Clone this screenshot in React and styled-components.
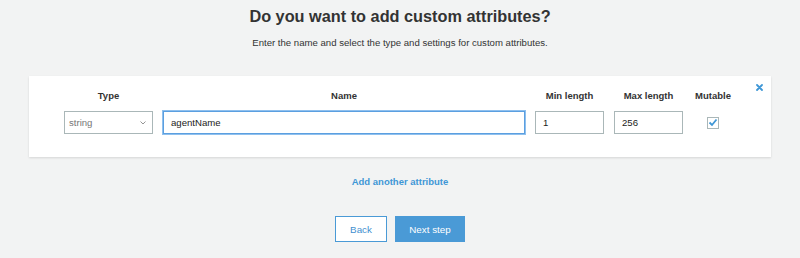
import React from "react";
import styled, { createGlobalStyle } from "styled-components";

const Global = createGlobalStyle`
  html, body { margin: 0; padding: 0; background: #f2f3f3; }
  body { font-family: "Liberation Sans", Arial, sans-serif; color: #333; }
  * { box-sizing: border-box; }
`;

const Page = styled.div`
  width: 800px;
  height: 258px;
  display: flex;
  flex-direction: column;
  align-items: center;
  padding-top: 6px;
`;

const Title = styled.h1`
  margin: 0;
  font-size: 16.3px;
  line-height: 20px;
  font-weight: 700;
  color: #333;
`;

const Subtitle = styled.p`
  margin: 10px 0 0;
  font-size: 9.6px;
  line-height: 14px;
  color: #333;
`;

const Card = styled.div`
  position: relative;
  margin-top: 26px;
  width: 742px;
  background: #fff;
  box-shadow: 0 1px 2px rgba(0, 0, 0, 0.12);
  padding: 13px 0 23px 35px;
`;

const Grid = styled.div`
  display: grid;
  grid-template-columns: 89px 362px 69px 69px 40px;
  column-gap: 10px;
  row-gap: 9px;
  align-items: center;
`;

const Label = styled.div`
  font-size: 9.5px;
  font-weight: 700;
  line-height: 13px;
  text-align: center;
  color: #333;
  white-space: nowrap;
`;

const Field = styled.div`
  height: 23px;
  border: 1px solid ${(p) => (p.$focus ? "#5b9fe0" : "#aab7b8")};
  box-shadow: ${(p) => (p.$focus ? "0 0 0 1px #8fc0ee" : "none")};
  background: #fff;
  display: flex;
  align-items: center;
  justify-content: space-between;
  padding: 0 6px 0 ${(p) => (p.$select ? "4px" : "7px")};
  font-size: 9.6px;
  color: ${(p) => (p.$select ? "#777" : "#222")};
`;

const CheckCell = styled.div`
  display: flex;
  justify-content: center;
`;

const Check = styled.div`
  width: 12px;
  height: 12px;
  border: 1px solid #aab7b8;
  background: #fff;
  display: flex;
  align-items: center;
  justify-content: center;
`;

const Close = styled.div`
  position: absolute;
  top: 8px;
  right: 8px;
  width: 7px;
  height: 7px;
  display: flex;
`;

const AddLink = styled.a`
  margin-top: 18px;
  font-size: 9.5px;
  font-weight: 700;
  color: #3f97d6;
  line-height: 14px;
`;

const Buttons = styled.div`
  display: flex;
  gap: 8px;
  margin-top: 27px;
`;

const Button = styled.button`
  height: 26px;
  padding: 0;
  width: ${(p) => (p.$primary ? "70px" : "52px")};
  border: 1px solid #4a9ad6;
  background: ${(p) => (p.$primary ? "#4a9ad6" : "#fff")};
  color: ${(p) => (p.$primary ? "#fff" : "#3f8fcf")};
  font-family: "Liberation Sans", Arial, sans-serif;
  font-size: 9.8px;
`;

const Chevron = () => (
  <svg width="6" height="4" viewBox="0 0 6 4">
    <path d="M0.5 0.5l2.5 2.5 2.5-2.5" fill="none" stroke="#888" strokeWidth="0.9" />
  </svg>
);

const Tick = () => (
  <svg width="10" height="9" viewBox="0 0 10 9">
    <path d="M1.5 4.5l2.5 2.5 4.5-5.5" fill="none" stroke="#3f97d6" strokeWidth="1.8" />
  </svg>
);

const XIcon = () => (
  <svg width="7" height="7" viewBox="0 0 7 7">
    <path d="M1 1l5 5M6 1l-5 5" stroke="#3f97d6" strokeWidth="1.8" strokeLinecap="round" />
  </svg>
);

export default function App() {
  return (
    <Page>
      <Global />
      <Title>Do you want to add custom attributes?</Title>
      <Subtitle>Enter the name and select the type and settings for custom attributes.</Subtitle>
      <Card>
        <Close>
          <XIcon />
        </Close>
        <Grid>
          <Label>Type</Label>
          <Label>Name</Label>
          <Label>Min length</Label>
          <Label>Max length</Label>
          <Label>Mutable</Label>
          <Field $select>
            string
            <Chevron />
          </Field>
          <Field $focus>agentName</Field>
          <Field>1</Field>
          <Field>256</Field>
          <CheckCell>
            <Check>
              <Tick />
            </Check>
          </CheckCell>
        </Grid>
      </Card>
      <AddLink>Add another attribute</AddLink>
      <Buttons>
        <Button>Back</Button>
        <Button $primary>Next step</Button>
      </Buttons>
    </Page>
  );
}
